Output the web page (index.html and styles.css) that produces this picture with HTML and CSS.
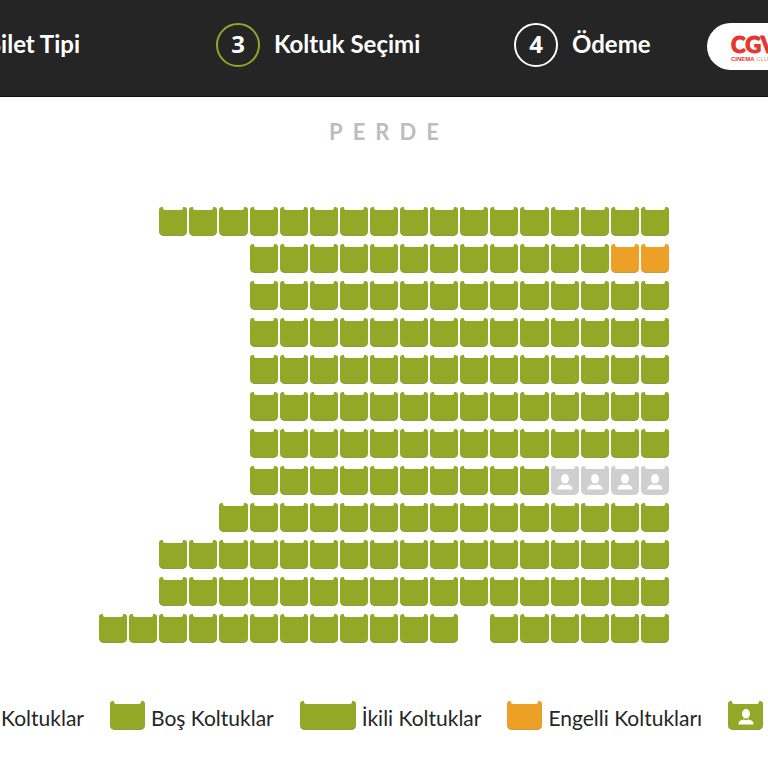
FILE: index.html
```html
<!DOCTYPE html>
<html lang="tr">
<head>
  <meta charset="UTF-8" />
  <meta name="viewport" content="width=device-width, initial-scale=1.0"/>
  <title>Koltuk Seçimi</title>
  <link rel="stylesheet" href="styles.css">
</head>
<body>

  <!-- shared person icon -->
  <svg class="defs" width="0" height="0" aria-hidden="true">
    <symbol id="person" viewBox="0 0 16 16">
      <ellipse cx="8" cy="4.800" rx="4" ry="4.800"/>
      <path d="M.5 15.500c0-3.500 2-4.500 5-5l2.500.8 2.500-.8c3 .5 5 1.500 5 5z"/>
    </symbol>
  </svg>

  <header class="header">
    <div class="step step-prev"><span class="label">Bilet Tipi</span></div>
    <div class="step active"><span class="number">3</span><span class="label">Koltuk Seçimi</span></div>
    <div class="step"><span class="number">4</span><span class="label">Ödeme</span></div>
    <a class="club" href="#" aria-label="CGV Cinema Club">
      <svg width="64" height="47" viewBox="0 0 64 47">
        <text class="club-name" x="0" y="30">CGV</text>
        <text class="club-sub" x="0" y="38">CINEMA<tspan class="club-thin"> CLUB</tspan></text>
      </svg>
    </a>
  </header>

  <main>
    <h1 class="screen">PERDE</h1>
    <div class="hall" id="hall"></div>

    <ul class="legend">
      <li class="legend-first">Koltuklar</li>
      <li><span class="seat"></span>Boş Koltuklar</li>
      <li><span class="seat double"></span>İkili Koltuklar</li>
      <li><span class="seat disabled"></span>Engelli Koltukları</li>
      <li><span class="seat"><svg><use href="#person"/></svg></span></li>
    </ul>
  </main>

  <script src="script.js"></script>
</body>
</html>
```

FILE: styles.css
```css
* {
  box-sizing: border-box;
}

body {
  margin: 0;
  background: #fff;
  color: #252525;
  font-family: Lato, "Open Sans", sans-serif;
  overflow-x: hidden;
}

.defs {
  position: absolute;
}

.header {
  display: grid;
  grid-template-columns: minmax(0, 216fr) minmax(0, 298fr) minmax(0, 193fr) minmax(0, 61fr);
  padding: 23px 0 26px;
  background: #252525;
  border-bottom: 1px solid #111;
  color: #fff;
  overflow: hidden;
}

.step {
  display: flex;
  align-items: flex-start;
  gap: 14px;
  white-space: nowrap;
}

.step-prev {
  justify-content: flex-end;
  padding-right: 136px;
}

.label {
  font-size: 24px;
  line-height: 42px;
  font-weight: 700;
}

.number {
  flex: none;
  width: 44px;
  height: 44px;
  border: 2px solid #fff;
  border-radius: 50%;
  font-family: "Open Sans", sans-serif;
  font-size: 24px;
  line-height: 38px;
  font-weight: 700;
  text-align: center;
}

.active .number {
  border-color: #94a627;
}

.club {
  display: block;
  width: 112px;
  height: 47px;
  padding-left: 24px;
  border-radius: 24px;
  background: #fff;
}

.club svg {
  display: block;
  fill: #e6352b;
}

.club-name {
  font-family: Lato, sans-serif;
  font-size: 22px;
  font-weight: 900;
  stroke: #e6352b;
  stroke-width: 1;
  stroke-linejoin: round;
}

.club-sub {
  font-family: "Liberation Sans", sans-serif;
  font-size: 6px;
  font-weight: 700;
}

.club-thin {
  font-weight: 400;
  opacity: 0.6;
}

.screen {
  margin: 20px 0 60px;
  padding-left: 10px;
  text-align: center;
  font-size: 22px;
  line-height: 30px;
  font-weight: 700;
  letter-spacing: 10px;
  color: #bdbdbd;
}

.hall {
  display: grid;
  grid-template-columns: repeat(19, 1fr);
  gap: 8px 2px;
  width: 570px;
  max-width: 100%;
  margin: 0 auto;
}

.seat {
  position: relative;
  display: flex;
  justify-content: center;
  align-items: center;
  flex: none;
  width: 35px;
  height: 29px;
  padding: 3px 0 0;
  border: 0;
  border-radius: 3px 3px 5px 5px;
  background: #94a827;
  box-shadow: inset 0 -1px #8c9c3c;
}

/* cut between the two armrests */
.seat::before {
  content: "";
  position: absolute;
  top: 0;
  left: 4px;
  right: 4px;
  height: 3px;
  border-radius: 0 0 2px 2px;
  background: #fff;
}

.seat svg {
  width: 16px;
  height: 16px;
  fill: #fff;
}

.hall .seat {
  width: auto;
  cursor: pointer;
}

.seat.double {
  width: 56px;
}

.seat.disabled {
  background: #eda026;
  box-shadow: inset 0 -1px #d8963c;
}

.seat.taken {
  background: #cfcfcf;
  box-shadow: none;
}

.legend {
  display: flex;
  gap: 26px;
  margin: 58px 0 0;
  padding: 0;
  list-style: none;
  font-size: 21px;
  line-height: 34px;
  white-space: nowrap;
}

.legend li {
  display: flex;
  align-items: flex-start;
  flex: none;
  gap: 6px;
}

.legend .legend-first {
  width: 84px;
  justify-content: flex-end;
}
```

FILE: script.js
```javascript
// o = boş, e = engelli, x = dolu, . = boşluk
const rows = [
  '..ooooooooooooooooo',
  '.....ooooooooooooee',
  '.....oooooooooooooo',
  '.....oooooooooooooo',
  '.....oooooooooooooo',
  '.....oooooooooooooo',
  '.....oooooooooooooo',
  '.....ooooooooooxxxx',
  '....ooooooooooooooo',
  '..ooooooooooooooooo',
  '..ooooooooooooooooo',
  'oooooooooooo.oooooo'
];

const hall = document.getElementById('hall');

rows.forEach(function (row, r) {
  [...row].forEach(function (type, c) {
    if (type === '.') {
      hall.appendChild(document.createElement('span'));
      return;
    }
    const seat = document.createElement('button');
    seat.type = 'button';
    seat.className = 'seat';
    seat.setAttribute('aria-label', `Sıra ${r + 1}, koltuk ${c + 1}`);
    if (type === 'e') seat.classList.add('disabled');
    if (type === 'x') {
      seat.classList.add('taken');
      seat.disabled = true;
      seat.innerHTML = '<svg><use href="#person"/></svg>';
    }
    hall.appendChild(seat);
  });
});
```
